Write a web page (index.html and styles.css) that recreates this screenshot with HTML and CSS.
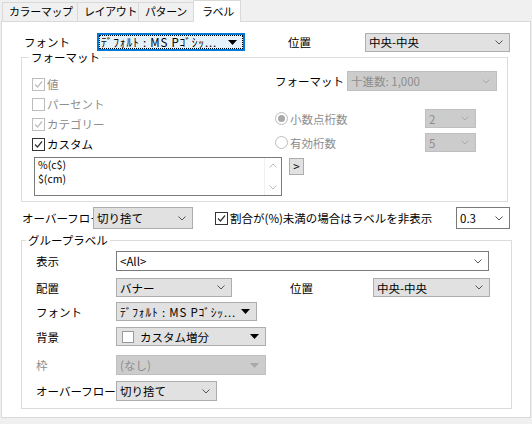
FILE: index.html
```html
<!DOCTYPE html>
<html lang="ja">
<head>
  <meta charset="UTF-8" />
  <title>ラベル</title>
  <link rel="stylesheet" href="styles.css">
</head>
<body>
  <div class="tabs">
    <div class="tab tab-cmap">カラーマップ</div>
    <div class="tab tab-layout">レイアウト</div>
    <div class="tab tab-pattern">パターン</div>
    <div class="tab tab-label active">ラベル</div>
  </div>

  <div class="panel">
    <div class="row row-top">
      <span class="lbl lbl-font">フォント</span>
      <div class="combo combo-focus w-font">
        <span class="focus-rect"><span class="hw">ﾃﾞﾌｫﾙﾄ : MS Pｺﾞｼｯ...</span><svg class="tri" width="9" height="5"><path d="M0 0h9L4.5 5z" fill="#000"/></svg></span>
      </div>
      <span class="lbl lbl-pos">位置</span>
      <div class="combo w-pos">中央-中央<svg class="chev" width="8" height="5"><polyline points="0.5,0.5 4,4 7.5,0.5" fill="none" stroke="#555"/></svg></div>
    </div>

    <fieldset class="group group-format">
      <legend>フォーマット</legend>
      <div class="fmt-top">
        <div class="checks">
          <div class="check-row off"><span class="box"><svg width="11" height="11"><polyline points="2,5.5 4.5,8 9,2.5" fill="none" stroke="#bcbcbc" stroke-width="1.2"/></svg></span>値</div>
          <div class="check-row off"><span class="box"></span>パーセント</div>
          <div class="check-row off"><span class="box"><svg width="11" height="11"><polyline points="2,5.5 4.5,8 9,2.5" fill="none" stroke="#bcbcbc" stroke-width="1.2"/></svg></span>カテゴリー</div>
          <div class="check-row"><span class="box"><svg width="11" height="11"><polyline points="2,5.5 4.5,8 9,2.5" fill="none" stroke="#333" stroke-width="1.2"/></svg></span>カスタム</div>
        </div>
        <div class="fmt-right">
          <div class="fmt-row">
            <span class="lbl lbl-fmt">フォーマット</span>
            <div class="combo disabled w-fmt">十進数: 1,000<svg class="chev" width="8" height="5"><polyline points="0.5,0.5 4,4 7.5,0.5" fill="none" stroke="#aaa"/></svg></div>
          </div>
          <div class="radio-row first">
            <span class="radio-lbl"><span class="radio on"></span>小数点桁数</span>
            <div class="combo disabled w-digits">2<svg class="chev" width="8" height="5"><polyline points="0.5,0.5 4,4 7.5,0.5" fill="none" stroke="#aaa"/></svg></div>
          </div>
          <div class="radio-row">
            <span class="radio-lbl"><span class="radio"></span>有効桁数</span>
            <div class="combo disabled w-digits">5<svg class="chev" width="8" height="5"><polyline points="0.5,0.5 4,4 7.5,0.5" fill="none" stroke="#aaa"/></svg></div>
          </div>
        </div>
      </div>
      <div class="fmt-bottom">
        <div class="memo">
          <div class="memo-text">%(c$)<br>$(cm)</div>
          <div class="memo-scroll">
            <svg width="8" height="5"><polyline points="0.5,4.5 4,1 7.5,4.5" fill="none" stroke="#bbb"/></svg>
            <svg width="8" height="5"><polyline points="0.5,0.5 4,4 7.5,0.5" fill="none" stroke="#bbb"/></svg>
          </div>
        </div>
        <div class="btn-more">&gt;</div>
      </div>
    </fieldset>

    <div class="row row-overflow">
      <span class="lbl lbl-over">オーバーフロー</span>
      <div class="combo tall w-cut">切り捨て<svg class="chev" width="8" height="5"><polyline points="0.5,0.5 4,4 7.5,0.5" fill="none" stroke="#555"/></svg></div>
      <div class="check-row inline"><span class="box"><svg width="11" height="11"><polyline points="2,5.5 4.5,8 9,2.5" fill="none" stroke="#333" stroke-width="1.2"/></svg></span>割合が(%)未満の場合はラベルを非表示</div>
      <div class="combo edit tall w-ratio">0.3<svg class="chev" width="8" height="5"><polyline points="0.5,0.5 4,4 7.5,0.5" fill="none" stroke="#555"/></svg></div>
    </div>

    <fieldset class="group group-label">
      <legend>グループラベル</legend>
      <div class="g-row r-show">
        <span class="lbl g-lbl">表示</span>
        <div class="combo edit w-show">&lt;All&gt;<svg class="chev" width="8" height="5"><polyline points="0.5,0.5 4,4 7.5,0.5" fill="none" stroke="#555"/></svg></div>
      </div>
      <div class="g-row r-place">
        <span class="lbl g-lbl">配置</span>
        <div class="combo w-banner">バナー<svg class="chev" width="8" height="5"><polyline points="0.5,0.5 4,4 7.5,0.5" fill="none" stroke="#555"/></svg></div>
        <span class="lbl lbl-gpos">位置</span>
        <div class="combo w-gpos">中央-中央<svg class="chev" width="8" height="5"><polyline points="0.5,0.5 4,4 7.5,0.5" fill="none" stroke="#555"/></svg></div>
      </div>
      <div class="g-row r-font">
        <span class="lbl g-lbl">フォント</span>
        <div class="combo w-gfont"><span class="hw">ﾃﾞﾌｫﾙﾄ : MS Pｺﾞｼｯ...</span><svg class="tri" width="9" height="5"><path d="M0 0h9L4.5 5z" fill="#000"/></svg></div>
      </div>
      <div class="g-row r-bg">
        <span class="lbl g-lbl">背景</span>
        <div class="combo w-bg"><span class="swatch"></span>カスタム増分<svg class="tri" width="9" height="5"><path d="M0 0h9L4.5 5z" fill="#000"/></svg></div>
      </div>
      <div class="g-row r-frame">
        <span class="lbl g-lbl off">枠</span>
        <div class="combo disabled w-bg">(なし)<svg class="tri" width="9" height="5"><path d="M0 0h9L4.5 5z" fill="#a8a8a8"/></svg></div>
      </div>
      <div class="g-row r-over">
        <span class="lbl g-lbl">オーバーフロー</span>
        <div class="combo w-gcut">切り捨て<svg class="chev" width="8" height="5"><polyline points="0.5,0.5 4,4 7.5,0.5" fill="none" stroke="#555"/></svg></div>
      </div>
    </fieldset>
  </div>
</body>
</html>
```

FILE: styles.css
```css
* {
  box-sizing: border-box;
}
body {
  margin: 0;
  width: 532px;
  height: 424px;
  background-color: #f0f0f0;
  font-family: "Noto Sans CJK JP", "Noto Sans", sans-serif;
  font-size: 11.5px;
  line-height: 14px;
  color: #000;
  overflow: hidden;
}

/* tabs */
.tabs {
  display: flex;
  height: 21px;
  padding-left: 2px;
}
.tab {
  height: 19px;
  margin-top: 2px;
  border: 1px solid #d9d9d9;
  border-bottom: none;
  padding-left: 6px;
  font-size: 11px;
  letter-spacing: -0.4px;
  line-height: 17px;
  white-space: nowrap;
}
.tab + .tab {
  margin-left: -1px;
}
.tab-cmap { width: 76px; }
.tab-layout { width: 62px; }
.tab-pattern { width: 56px; }
.tab-label {
  width: 48px;
}
.tab.active {
  position: relative;
  z-index: 1;
  height: 22px;
  margin-top: 0;
  background-color: #fff;
  padding-left: 8px;
  line-height: 20px;
}

.panel {
  margin-left: 1px;
  width: 530px;
  height: 397px;
  background-color: #fff;
  border: 1px solid #d9d9d9;
}

/* generic controls */
.row {
  display: flex;
  align-items: center;
}
.lbl {
  white-space: nowrap;
  flex: none;
}
.combo {
  flex: none;
  display: flex;
  align-items: center;
  height: 19px;
  padding-left: 3px;
  padding-right: 6px;
  background-color: #e1e1e1;
  border: 1px solid #adadad;
  white-space: nowrap;
  overflow: hidden;
}
.combo .chev,
.combo .tri {
  margin-left: auto;
  flex: none;
}
.combo.edit {
  background-color: #fff;
  border-color: #7a7a7a;
}
.combo.disabled {
  background-color: #cccccc;
  border-color: #bfbfbf;
  color: #8d8d8d;
}
.combo.tall {
  height: 22px;
}
.combo-focus {
  border: 2px solid #0078d7;
  background-color: #e5f1fb;
  padding: 0;
}
.focus-rect {
  display: flex;
  align-items: center;
  width: 100%;
  height: 100%;
  border: 1px dotted #000;
  padding-left: 1px;
  padding-right: 5px;
}
.hw {
  letter-spacing: 0.8px;
}

/* top row */
.row-top {
  margin-top: 10px;
  height: 20px;
}
.lbl-font {
  margin-left: 22px;
  width: 73px;
}
.w-font {
  width: 148px;
  height: 18px;
}
.lbl-pos {
  margin-left: 43px;
  width: 77px;
}
.w-pos {
  width: 145px;
}

/* group boxes */
.group {
  margin: 0 0 0 19px;
  padding: 0;
  border: 1px solid #dcdcdc;
  min-width: 0;
}
.group legend {
  padding: 0 2px;
  line-height: 14px;
}
.group-format {
  width: 487px;
  margin-top: -2px;
}
.group-format legend {
  margin-left: 7px;
}
.fmt-top {
  display: flex;
  margin-top: 7px;
}
.checks {
  width: 253px;
  padding-left: 10px;
  padding-top: 3px;
}
.check-row {
  display: flex;
  align-items: center;
  height: 20px;
  white-space: nowrap;
}
.check-row.off {
  color: #8d8d8d;
}
.box {
  width: 13px;
  height: 13px;
  border: 1px solid #333;
  margin-right: 2px;
  display: flex;
  align-items: center;
  justify-content: center;
  flex: none;
}
.check-row.off .box {
  border-color: #bcbcbc;
}
.fmt-row {
  display: flex;
  align-items: center;
}
.lbl-fmt {
  width: 72px;
}
.w-fmt {
  width: 150px;
  height: 20px;
}
.radio-row {
  display: flex;
  align-items: center;
  margin-top: 5px;
}
.radio-row.first {
  margin-top: 18px;
}
.radio-lbl {
  display: flex;
  align-items: center;
  width: 150px;
  color: #8d8d8d;
}
.radio {
  width: 13px;
  height: 13px;
  border: 1px solid #bcbcbc;
  border-radius: 50%;
  margin-right: 2px;
  display: flex;
  align-items: center;
  justify-content: center;
}
.radio.on::after {
  content: "";
  width: 7px;
  height: 7px;
  border-radius: 50%;
  background-color: #a8a8a8;
}
.w-digits {
  width: 51px;
}
.fmt-bottom {
  display: flex;
  align-items: flex-start;
  margin: 3px 0 5px 12px;
}
.memo {
  display: flex;
  width: 248px;
  height: 39px;
  border: 1px solid #7a7a7a;
}
.memo-text {
  flex: 1;
  padding: 0 0 0 3px;
  font-size: 10.5px;
  line-height: 14px;
}
.memo-scroll {
  width: 17px;
  display: flex;
  flex-direction: column;
  align-items: center;
  justify-content: space-between;
  padding: 5px 0;
  border-left: 1px solid #f0f0f0;
}
.btn-more {
  width: 15px;
  height: 17px;
  margin: 1px 0 0 7px;
  background-color: #e1e1e1;
  border: 1px solid #adadad;
  text-align: center;
  line-height: 14px;
}

/* overflow row */
.row-overflow {
  margin-top: 5px;
  height: 22px;
}
.lbl-over {
  margin-left: 20px;
  width: 71px;
  overflow: hidden;
}
.w-cut {
  width: 100px;
}
.check-row.inline {
  margin-left: 22px;
}
.w-ratio {
  margin-left: auto;
  margin-right: 20px;
  width: 54px;
}

/* group label box */
.group-label {
  width: 491px;
  margin-top: 4px;
  padding-bottom: 7px;
}
.group-label legend {
  margin-left: 4px;
}
.g-row {
  display: flex;
  align-items: center;
}
.g-lbl {
  padding-left: 14px;
  width: 94px;
}
.g-lbl.off {
  color: #8d8d8d;
}
.r-show { margin-top: 4px; }
.r-place { margin-top: 7px; }
.r-font { margin-top: 5px; }
.r-bg { margin-top: 6px; }
.r-frame { margin-top: 9px; }
.r-over { margin-top: 6px; }
.w-show {
  width: 373px;
  height: 20px;
}
.w-banner {
  width: 116px;
}
.lbl-gpos {
  margin-left: 58px;
  width: 83px;
}
.w-gpos {
  width: 117px;
}
.w-gfont {
  width: 141px;
}
.w-bg {
  width: 150px;
}
.r-frame .combo {
  height: 20px;
}
.w-gcut {
  width: 101px;
  height: 20px;
}
.swatch {
  width: 12px;
  height: 12px;
  border: 1px solid #999;
  background-color: #fff;
  margin: 0 6px 0 2px;
}
```
